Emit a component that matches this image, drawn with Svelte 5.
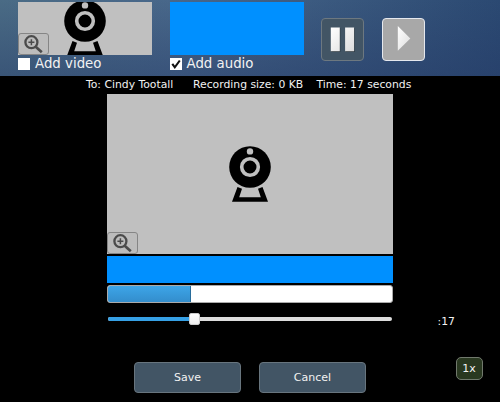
<script>
  let video = $state(false);
  let audio = $state(true);
  const progress = 29.3;
  const position = 30.5;
</script>

{#snippet webcam()}
  <svg class="webcam" width="44" height="58" viewBox="0 0 44 58">
    <circle cx="22" cy="22" r="20.8" />
    <circle cx="22" cy="22" r="8.3" fill="none" stroke="#c0c0c0" stroke-width="3.6" />
    <circle cx="22" cy="6.4" r="3.2" fill="#c0c0c0" />
    <path d="M9.5 42 L14 43.8 L11.2 52.2 H32.8 L30 43.8 L34.5 42 L40 56.7 H4 Z" />
  </svg>
{/snippet}

{#snippet zoom()}
  <button class="zoom" aria-label="Zoom in">
    <svg width="20" height="19" viewBox="0 0 20 19">
      <g fill="none" stroke="#4b4b4b">
        <circle cx="7.4" cy="7.2" r="6" stroke-width="2.3" />
        <path d="M11.7 11.7 L17.8 17.3" stroke-width="2.7" />
        <path d="M7.4 4.2 V10.2 M4.4 7.2 H10.4" stroke-width="1.5" />
      </g>
    </svg>
  </button>
{/snippet}

<div class="app">
  <header>
    <div class="source">
      <div class="preview gray">{@render webcam()}{@render zoom()}</div>
      <label><input type="checkbox" bind:checked={video} /><span class="box"></span><span>Add video</span></label>
    </div>
    <div class="source">
      <div class="preview blue"></div>
      <label>
        <input type="checkbox" bind:checked={audio} />
        <span class="box">
          {#if audio}
            <svg width="12" height="12" viewBox="0 0 12 12"><path d="M2.3 5.8 L4.8 9.3 L9.8 2.5" fill="none" stroke="#111" stroke-width="2.1" /></svg>
          {/if}
        </span>
        <span>Add audio</span>
      </label>
    </div>
    <div class="controls">
      <button class="media pause" aria-label="Pause">
        <svg width="42" height="42" viewBox="0 0 42 42">
          <defs><linearGradient id="shine" x1="0" y1="0" x2="1" y2="1"><stop offset="0" stop-color="#fff" /><stop offset="1" stop-color="#ddd" /></linearGradient></defs>
          <path d="M10.3 10 h9 v24 h-9z M24.6 10 h9 v24 h-9z" fill="#28333a" />
          <path d="M9.8 9.5 h9 v23.7 h-9z M24.1 9.5 h9 v23.7 h-9z" fill="url(#shine)" />
        </svg>
      </button>
      <button class="media play" aria-label="Play">
        <svg width="42" height="42" viewBox="0 0 42 42">
          <path d="M15.8 8 L28.3 20.4 L15.8 32.7 Z" fill="url(#shine)" />
        </svg>
      </button>
    </div>
  </header>

  <main>
    <div class="status">
      <span class="to">To: Cindy Tootall</span>
      <span class="size">Recording size: 0 KB</span>
      <span class="time">Time: 17 seconds</span>
    </div>
    <div class="screen">{@render webcam()}{@render zoom()}</div>
    <div class="wave"></div>
    <div class="progress"><div class="fill" style:width="{progress}%"></div></div>
    <div class="seek">
      <div class="track">
        <div class="played" style:width="{position}%"></div>
        <div class="thumb" style:left="{position}%"></div>
      </div>
      <span class="clock">:17</span>
    </div>
    <div class="actions">
      <button>Save</button>
      <button>Cancel</button>
      <button class="speed">1x</button>
    </div>
  </main>
</div>

<style>
  :global(body) { margin: 0; background: #000; }
  .app {
    width: 500px; height: 402px; overflow: hidden; background: #000; color: #f2f2f2;
    font-family: "DejaVu Sans", sans-serif; font-size: 11px;
  }
  * { box-sizing: border-box; }
  svg { display: block; flex: none; }
  button { margin: 0; padding: 0; font: inherit; color: inherit; }
  header {
    display: flex; height: 76px; padding: 2px 0 0 18px;
    background: linear-gradient(to bottom, rgba(35, 55, 100, 0) 0, rgba(35, 55, 100, .42) 100%), linear-gradient(to right, #4a6b85 0, #48678a 35%, #2b4972 100%);
  }
  .source { width: 134px; margin-right: 17.5px; }
  .preview { position: relative; display: flex; justify-content: center; height: 53px; overflow: hidden; }
  .gray { background: #c0c0c0; }
  .gray .webcam { margin-top: -3.3px; }
  .blue { background: #0090ff; }
  .zoom {
    position: absolute; left: 0; bottom: 0; width: 31px; height: 22px;
    display: flex; align-items: center; justify-content: center;
    border: 1px solid #858585; border-radius: 3px; background: #bcbcbc;
  }
  label {
    position: relative; display: flex; align-items: center; gap: 5px; height: 18px;
    font-size: 13.33px; line-height: 18px; white-space: nowrap;
  }
  input { position: absolute; opacity: 0; width: 12px; height: 12px; margin: 0; }
  .box { width: 12px; height: 12px; background: #fff; }
  .controls { display: flex; gap: 18px; padding-top: 16px; }
  .media { width: 43px; height: 43px; border-radius: 4px; display: flex; overflow: hidden; }
  .media svg { margin: -1px; }
  .pause { background: #425565; border: 1px solid #6d7880; }
  .play { background: #a8a8a8; border: 1px solid #e5e8ee; }
  .status {
    display: flex; height: 18px; padding-left: 86px;
    font-size: 10.8px; line-height: 18px; white-space: nowrap;
  }
  .to { width: 107px; }
  .size { width: 123.5px; }
  .screen {
    position: relative; display: flex; justify-content: center;
    width: 286px; height: 160px; margin-left: 107px; padding-top: 51px; background: #c0c0c0;
  }
  .wave { width: 286px; height: 27px; margin: 2px 0 0 107px; background: #0090ff; }
  .progress {
    width: 286px; height: 18px; margin: 2px 0 0 107px; overflow: hidden;
    background: #fff; border: 1px solid #aaa; border-radius: 3px;
  }
  .fill { height: 100%; background: linear-gradient(#3da5e8, #338dcc); border-right: 1px solid #286c9b; }
  .seek { display: flex; height: 59px; padding: 14px 0 0 108px; }
  .track { position: relative; width: 284px; height: 4px; background: #ddd; border-radius: 2px; }
  .played { height: 4px; background: #36a0e5; border-radius: 2px; }
  .thumb {
    position: absolute; top: -4px; width: 11px; height: 12px; margin-left: -6px;
    background: linear-gradient(#fff, #eee); border: 1px solid #ccc; border-radius: 2px;
  }
  .clock { margin: -2px 0 0 45.5px; line-height: 14px; font-size: 10.8px; }
  .actions { display: flex; padding-left: 134px; }
  .actions button {
    width: 107px; height: 31px; margin-right: 18px;
    background: #425565; border: 1px solid #68757e; border-radius: 4px;
  }
  .actions .speed { width: 27px; height: 23px; margin: -5px 0 0 71.5px; background: #293820; border-color: #71796d; border-radius: 5px; }
</style>
